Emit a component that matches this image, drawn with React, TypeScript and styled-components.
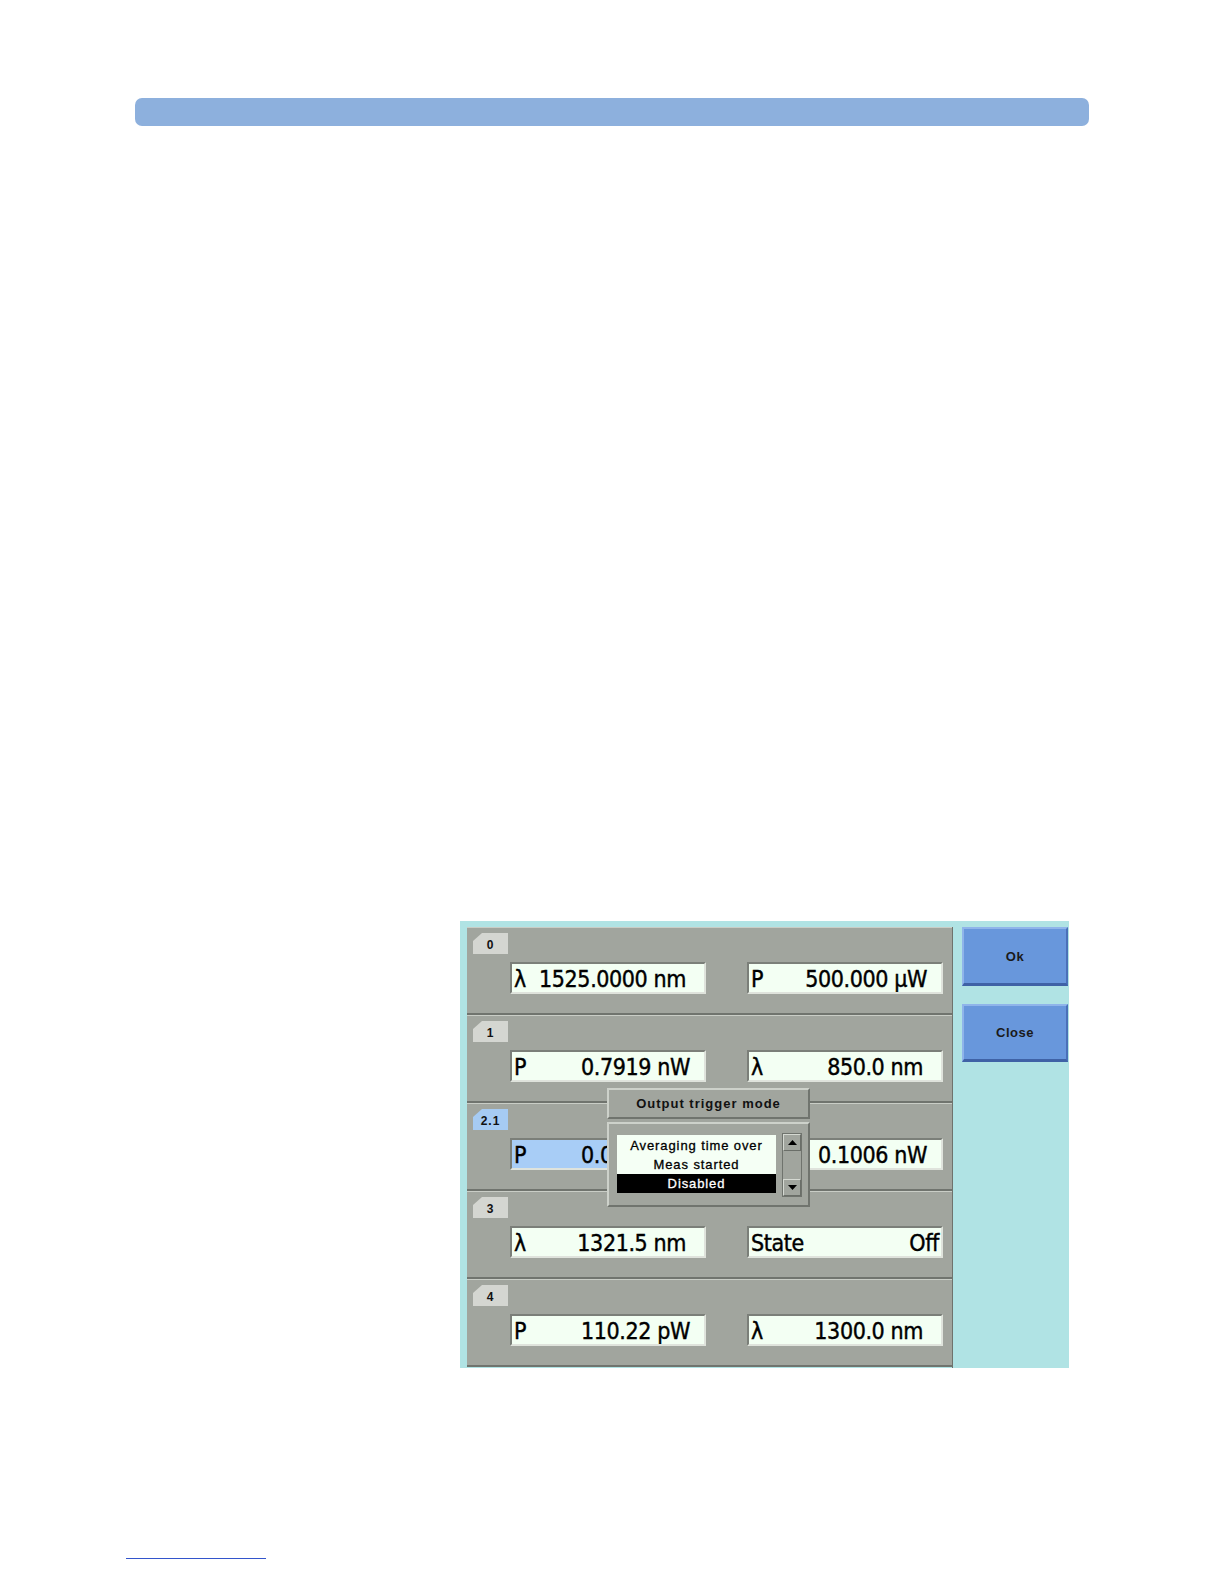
import React from "react";
import styled, { createGlobalStyle } from "styled-components";

const Global = createGlobalStyle`
  html, body { margin: 0; padding: 0; background: #ffffff; overflow: hidden; }
  body { font-family: "Liberation Sans", Arial, sans-serif; }
`;

const Page = styled.div`
  width: 1224px;
  height: 1584px;
  overflow: hidden;
  position: relative;
  padding-top: 98px;
  box-sizing: border-box;
`;

const HeaderBar = styled.div`
  margin-left: 135px;
  width: 954px;
  height: 28px;
  border-radius: 7px;
  background: #8db0dd;
`;

const Screen = styled.div`
  position: relative;
  margin-top: 795px;
  margin-left: 460px;
  width: 609px;
  height: 447px;
  background: #b0e3e4;
  display: flex;
  padding: 6px 0 0 7px;
  box-sizing: border-box;
`;

const Rows = styled.div`
  width: 485px;
  display: flex;
  flex-direction: column;
  border-right: 1px solid #6f736d;
`;

const Row = styled.div<{ $h: number }>`
  height: ${(p) => p.$h}px;
  box-sizing: border-box;
  background: #a1a59e;
  border-top: 1px solid #c9cdc6;
  border-bottom: 2px solid #70746e;
  padding: 5px 0 0 6px;
  display: flex;
  flex-direction: column;
`;

const Tab = styled.div<{ $active?: boolean }>`
  width: 35px;
  height: 21px;
  background: ${(p) => (p.$active ? "#a6cbf3" : "#d4d6d1")};
  clip-path: polygon(9px 0, 100% 0, 100% 100%, 0 100%, 0 8px);
  font: bold 12px "Liberation Sans", Arial, sans-serif;
  letter-spacing: 1px;
  color: #111;
  display: flex;
  align-items: center;
  justify-content: center;
  padding-top: 3px;
  box-sizing: border-box;
`;

const Fields = styled.div`
  display: flex;
  gap: 41px;
  margin-top: 8px;
  margin-left: 37px;
`;

const Field = styled.div<{ $hl?: boolean; $pad: number }>`
  width: 196px;
  height: 32px;
  box-sizing: border-box;
  background: ${(p) => (p.$hl ? "#a8cdf6" : "#f3fff3")};
  border-top: 2px solid #7b7f79;
  border-left: 2px solid #7b7f79;
  border-bottom: 2px solid #dfe3dc;
  border-right: 2px solid #dfe3dc;
  display: flex;
  align-items: center;
  justify-content: space-between;
  padding: 1px ${(p) => p.$pad}px 0 2px;
  font: 23px "DejaVu Sans Condensed", "DejaVu Sans", sans-serif;
  letter-spacing: -0.4px;
  -webkit-text-stroke: 0.4px #000;
  color: #000;
  white-space: nowrap;
  overflow: hidden;
`;

const Label = styled.span``;
const Value = styled.span``;

const Side = styled.div`
  display: flex;
  flex-direction: column;
  gap: 18px;
  padding-left: 9px;
`;

const Button = styled.div<{ $h: number }>`
  width: 106px;
  height: ${(p) => p.$h}px;
  box-sizing: border-box;
  background: #6897dc;
  border-top: 2px solid #8fb4ea;
  border-left: 2px solid #8fb4ea;
  border-bottom: 3px solid #3f62a6;
  border-right: 2px solid #4a70b8;
  display: flex;
  align-items: center;
  justify-content: center;
  font: bold 13px "Liberation Sans", Arial, sans-serif;
  letter-spacing: 0.5px;
  color: #1a1a1a;
`;

const Popup = styled.div`
  position: absolute;
  left: 147px;
  top: 167px;
  width: 203px;
  display: flex;
  flex-direction: column;
  gap: 3px;
`;

const PopupTitle = styled.div`
  height: 31px;
  box-sizing: border-box;
  background: #a1a59e;
  border-top: 2px solid #cdd1ca;
  border-left: 2px solid #cdd1ca;
  border-bottom: 2px solid #70746e;
  border-right: 2px solid #70746e;
  display: flex;
  align-items: center;
  justify-content: center;
  font: bold 13px "Liberation Sans", Arial, sans-serif;
  letter-spacing: 1px;
  color: #111;
`;

const PopupBody = styled.div`
  height: 85px;
  box-sizing: border-box;
  background: #a1a59e;
  border-top: 2px solid #cdd1ca;
  border-left: 2px solid #cdd1ca;
  border-bottom: 2px solid #70746e;
  border-right: 2px solid #70746e;
  display: flex;
  padding: 11px 0 0 8px;
  gap: 6px;
`;

const List = styled.div`
  width: 159px;
  height: 57px;
  background: #f5fff5;
  display: flex;
  flex-direction: column;
  padding-top: 1px;
  box-sizing: border-box;
`;

const Item = styled.div<{ $sel?: boolean }>`
  height: 19px;
  text-align: center;
  font: 13px "Liberation Sans", Arial, sans-serif;
  line-height: 19px;
  letter-spacing: 0.9px;
  -webkit-text-stroke: 0.3px ${(p) => (p.$sel ? "#fff" : "#000")};
  background: ${(p) => (p.$sel ? "#000" : "transparent")};
  color: ${(p) => (p.$sel ? "#fff" : "#000")};
`;

const Scroll = styled.div`
  width: 20px;
  height: 64px;
  margin-top: -2px;
  box-sizing: border-box;
  border: 1px solid #6f736d;
  background: #a1a59e;
  display: flex;
  flex-direction: column;
  justify-content: space-between;
`;

const ScrollBtn = styled.div`
  height: 17px;
  box-sizing: border-box;
  border-top: 1px solid #d5d9d2;
  border-left: 1px solid #d5d9d2;
  border-bottom: 1px solid #6a6e68;
  border-right: 1px solid #6a6e68;
  display: flex;
  align-items: center;
  justify-content: center;
`;

const FooterLine = styled.div`
  position: absolute;
  left: 126px;
  top: 1558px;
  width: 140px;
  height: 1px;
  background: #3355cc;
`;

type F = { label: string; value: string; pad: number; hl?: boolean };
type R = { tab: string; active?: boolean; h: number; fields: [F, F] };

const rows: R[] = [
  {
    tab: "0",
    h: 88,
    fields: [
      { label: "λ", value: "1525.0000 nm", pad: 18 },
      { label: "P", value: "500.000 μW", pad: 14 },
    ],
  },
  {
    tab: "1",
    h: 88,
    fields: [
      { label: "P", value: "0.7919 nW", pad: 14 },
      { label: "λ", value: "850.0 nm", pad: 18 },
    ],
  },
  {
    tab: "2.1",
    active: true,
    h: 88,
    fields: [
      { label: "P", value: "0.0000 nW", pad: 14, hl: true },
      { label: "P", value: "0.1006 nW", pad: 14 },
    ],
  },
  {
    tab: "3",
    h: 88,
    fields: [
      { label: "λ", value: "1321.5 nm", pad: 18 },
      { label: "State", value: "Off", pad: 2 },
    ],
  },
  {
    tab: "4",
    h: 88,
    fields: [
      { label: "P", value: "110.22 pW", pad: 14 },
      { label: "λ", value: "1300.0 nm", pad: 18 },
    ],
  },
];

const Arrow = ({ up }: { up?: boolean }) => (
  <svg width="9" height="5" viewBox="0 0 9 5">
    <polygon points={up ? "4.5,0 9,5 0,5" : "0,0 9,0 4.5,5"} fill="#000" />
  </svg>
);

export default function App() {
  return (
    <Page>
      <Global />
      <HeaderBar />
      <Screen>
        <Rows>
          {rows.map((r) => (
            <Row key={r.tab} $h={r.h}>
              <Tab $active={r.active}>{r.tab}</Tab>
              <Fields>
                {r.fields.map((f, i) => (
                  <Field key={i} $hl={f.hl} $pad={f.pad}>
                    <Label>{f.label}</Label>
                    <Value>{f.value}</Value>
                  </Field>
                ))}
              </Fields>
            </Row>
          ))}
        </Rows>
        <Side>
          <Button $h={59}>Ok</Button>
          <Button $h={58}>Close</Button>
        </Side>
        <Popup>
          <PopupTitle>Output trigger mode</PopupTitle>
          <PopupBody>
            <List>
              <Item>Averaging time over</Item>
              <Item>Meas started</Item>
              <Item $sel>Disabled</Item>
            </List>
            <Scroll>
              <ScrollBtn>
                <Arrow up />
              </ScrollBtn>
              <ScrollBtn>
                <Arrow />
              </ScrollBtn>
            </Scroll>
          </PopupBody>
        </Popup>
      </Screen>
      <FooterLine />
    </Page>
  );
}
